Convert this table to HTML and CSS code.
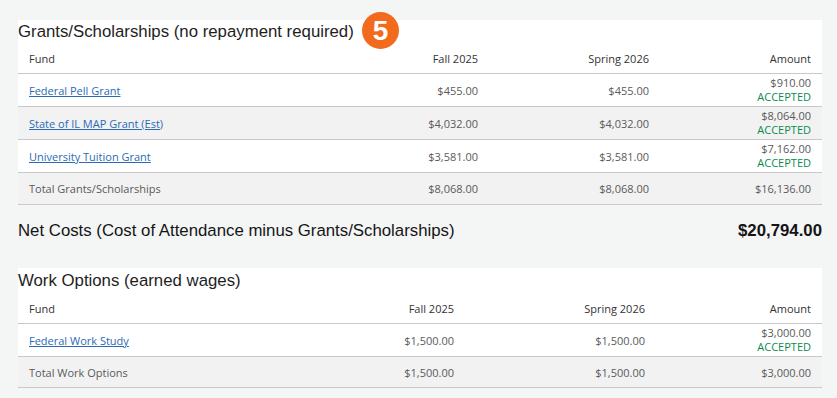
FILE: index.html
```html
<!DOCTYPE html>
<html>
<head>
<meta charset="utf-8">
<link rel="stylesheet" href="styles.css">
</head>
<body>
<div class="page">
  <section class="panel grants">
    <h2 class="panel-title">Grants/Scholarships (no repayment required)</h2>
    <span class="badge">5</span>
    <div class="row head">
      <div class="c fund">Fund</div><div class="c num">Fall 2025</div><div class="c num">Spring 2026</div><div class="c num">Amount</div>
    </div>
    <div class="row">
      <div class="c fund"><a href="#">Federal Pell Grant</a></div><div class="c num">$455.00</div><div class="c num">$455.00</div><div class="c num amt"><span class="val">$910.00</span><span class="ok">ACCEPTED</span></div>
    </div>
    <div class="row alt">
      <div class="c fund"><a href="#">State of IL MAP Grant (Est)</a></div><div class="c num">$4,032.00</div><div class="c num">$4,032.00</div><div class="c num amt"><span class="val">$8,064.00</span><span class="ok">ACCEPTED</span></div>
    </div>
    <div class="row">
      <div class="c fund"><a href="#">University Tuition Grant</a></div><div class="c num">$3,581.00</div><div class="c num">$3,581.00</div><div class="c num amt"><span class="val">$7,162.00</span><span class="ok">ACCEPTED</span></div>
    </div>
    <div class="row alt total">
      <div class="c fund">Total Grants/Scholarships</div><div class="c num">$8,068.00</div><div class="c num">$8,068.00</div><div class="c num">$16,136.00</div>
    </div>
  </section>

  <div class="net">
    <span>Net Costs (Cost of Attendance minus Grants/Scholarships)</span>
    <strong>$20,794.00</strong>
  </div>

  <section class="panel work">
    <h2 class="panel-title">Work Options (earned wages)</h2>
    <div class="row head">
      <div class="c fund">Fund</div><div class="c num">Fall 2025</div><div class="c num">Spring 2026</div><div class="c num">Amount</div>
    </div>
    <div class="row">
      <div class="c fund"><a href="#">Federal Work Study</a></div><div class="c num">$1,500.00</div><div class="c num">$1,500.00</div><div class="c num amt"><span class="val">$3,000.00</span><span class="ok">ACCEPTED</span></div>
    </div>
    <div class="row alt total">
      <div class="c fund">Total Work Options</div><div class="c num">$1,500.00</div><div class="c num">$1,500.00</div><div class="c num">$3,000.00</div>
    </div>
  </section>
</div>
</body>
</html>
```

FILE: styles.css
```css
* { box-sizing: border-box; }
html, body { margin: 0; padding: 0; }
body {
  background: #f4f5f5;
  font-family: "Open Sans", "Liberation Sans", sans-serif;
  width: 837px;
  height: 398px;
  overflow: hidden;
}
.page {
  padding: 20px 15px 0 18px;
}
.panel {
  position: relative;
  background: #fff;
}
.panel-title {
  margin: 0;
  height: 24px;
  padding-top: 1px;
  font-family: "Liberation Sans", Arial, sans-serif;
  font-weight: normal;
  font-size: 16.8px;
  line-height: 22px;
  color: #1e1e1e;
}
.work .panel-title {
  height: 26px;
  padding-top: 2px;
}
.badge {
  position: absolute;
  left: 344px;
  top: -8px;
  width: 37px;
  height: 37px;
  border-radius: 50%;
  background: #f26b1d;
  color: #fff;
  font-family: "Liberation Sans", Arial, sans-serif;
  font-weight: bold;
  font-size: 28px;
  line-height: 37px;
  text-align: center;
}
.row {
  display: grid;
  height: 33px;
  border-bottom: 1px solid #c9c9c9;
  font-size: 11px;
  color: #5a5a5a;
  align-items: center;
}
.grants .row { grid-template-columns: 302px 169px 171px 162px; }
.work .row { grid-template-columns: 278px 169px 191px 166px; }
.row.head {
  height: 30px;
  color: #333;
}
.row.total { height: 32px; }
.work .row.head { height: 30px; }
.work .row.total { height: 31px; }
.row.alt { background: #f2f2f2; }
.c {
  padding: 0 11px;
  line-height: 13px;
}
.c.num { text-align: right; }
.row.head .c { padding-bottom: 1px; }
.amt {
  display: flex;
  flex-direction: column;
  align-items: flex-end;
  gap: 0;
}
.amt .val,
.amt .ok {
  display: block;
  line-height: 14px;
  height: 14px;
  overflow: visible;
}
.amt .ok {
  color: #0b8a4f;
  font-size: 11px;
}
.row a {
  color: #2a6bb5;
  text-decoration: underline;
}
.net {
  display: flex;
  justify-content: space-between;
  align-items: flex-start;
  height: 63px;
  padding-top: 16px;
  font-family: "Liberation Sans", Arial, sans-serif;
  font-size: 16.8px;
  line-height: 20px;
  color: #151515;
}
.net strong { font-weight: bold; }
```
